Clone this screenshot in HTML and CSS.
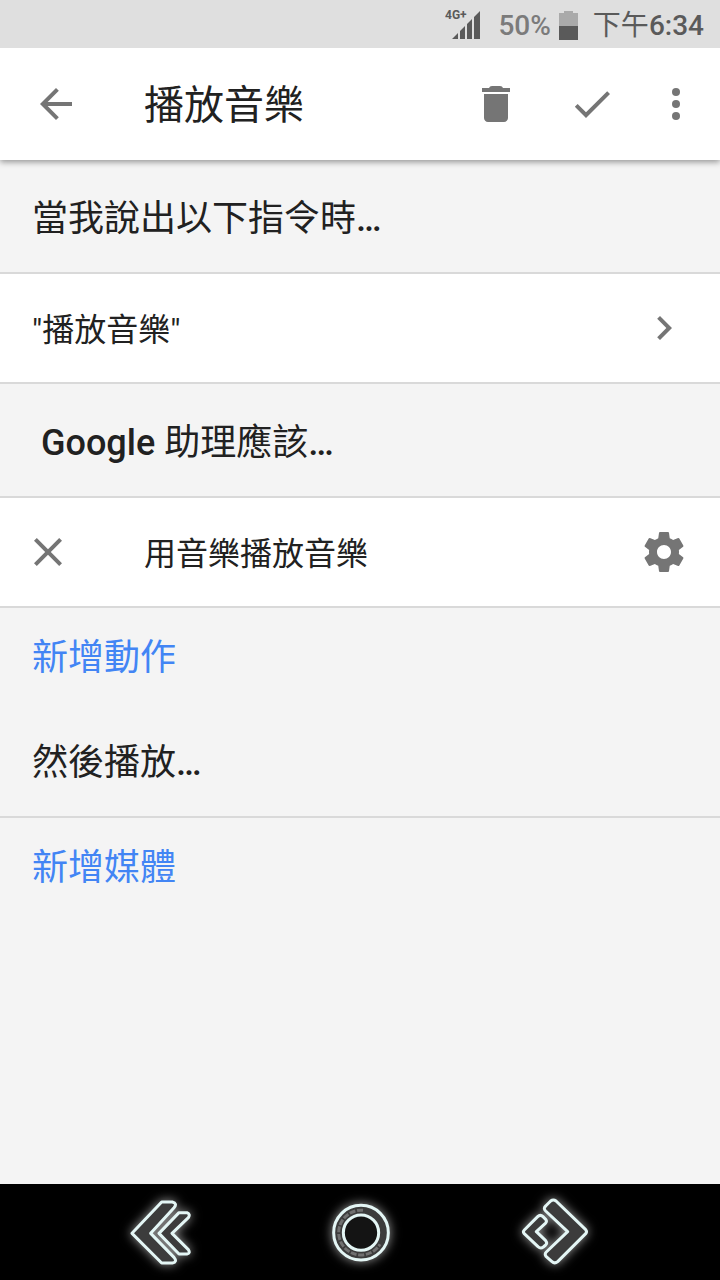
FILE: index.html
```html
<!DOCTYPE html>
<html lang="zh-Hant">
<head>
<meta charset="utf-8">
<meta name="viewport" content="width=device-width, initial-scale=1">
<title>播放音樂</title>
<link rel="stylesheet" href="styles.css">
</head>
<body>
<div class="screen">
  <div class="status">
    <svg class="signal" viewBox="0 0 36 32" aria-hidden="true">
      <text class="network" x="0" y="10">4G+</text>
      <path d="M7 30 13 24V30zM15 22 20 17V30H15zM22 15 27 10V30H22zM29 8 35 2V30H29z" fill="#5a5a5a"/>
    </svg>
    <span class="percent">50%</span>
    <svg class="battery" viewBox="0 0 20 32" aria-hidden="true">
      <path d="M0 4H5V2H14V4H19V18H0z" fill="#aaa"/>
      <path d="M0 17H19V31H0z" fill="#5a5a5a"/>
    </svg>
    <span class="clock">下午<span class="medium">6:34</span></span>
  </div>

  <header class="toolbar">
    <button class="icon-button back" aria-label="返回">
      <svg viewBox="0 0 24 24"><path d="M20 11H7.83l5.59-5.59L12 4l-8 8 8 8 1.41-1.41L7.83 13H20z"/></svg>
    </button>
    <h1 class="title">播放音樂</h1>
    <button class="icon-button" aria-label="刪除">
      <svg viewBox="0 0 24 24"><path d="M6 19c0 1.1.9 2 2 2h8c1.1 0 2-.9 2-2V7H6zM19 4h-3.500q-.3-1-1.500-1h-4q-1.200 0-1.500 1H5v2h14z"/></svg>
    </button>
    <button class="icon-button" aria-label="完成">
      <svg viewBox="0 0 24 24"><path d="M9 16.170 4.830 12l-1.420 1.410L9 19 21 7l-1.410-1.410z"/></svg>
    </button>
    <button class="icon-button more" aria-label="更多選項">
      <svg viewBox="0 0 24 24"><circle cx="12" cy="6" r="2"/><circle cx="12" cy="12" r="2"/><circle cx="12" cy="18" r="2"/></svg>
    </button>
  </header>

  <main class="content">
    <h2 class="heading">當我說出以下指令時<span class="medium">…</span></h2>
    <button class="row phrase">
      <span class="label">"播放音樂"</span>
      <svg class="icon" viewBox="0 0 24 24" aria-hidden="true"><path d="M10 6 8.590 7.410 13.170 12l-4.580 4.590L10 18l6-6z"/></svg>
    </button>
    <h2 class="heading"><span class="medium">&nbsp;Google </span>助理應該<span class="medium">…</span></h2>
    <div class="row">
      <button class="icon-button remove" aria-label="移除">
        <svg viewBox="0 0 24 24"><path d="M19 6.410 17.590 5 12 10.590 6.410 5 5 6.410 10.590 12 5 17.590 6.410 19 12 13.410 17.590 19 19 17.590 13.410 12z"/></svg>
      </button>
      <span class="label">用音樂播放音樂</span>
      <button class="icon-button settings" aria-label="設定">
        <svg viewBox="0 0 24 24"><path d="M19.430 12.980c.04-.32.07-.64.07-.98s-.03-.66-.07-.98l2.110-1.650c.19-.15.24-.42.12-.64l-2-3.460c-.12-.22-.39-.3-.61-.22l-2.490 1c-.52-.4-1.080-.73-1.690-.98l-.38-2.650C14.460 2.180 14.250 2 14 2h-4c-.25 0-.46.18-.49.42l-.38 2.650c-.61.25-1.170.59-1.690.98l-2.490-1c-.23-.09-.49 0-.61.22l-2 3.460c-.13.22-.07.49.12.64l2.110 1.650c-.04.32-.07.65-.07.98s.03.66.07.98l-2.110 1.650c-.19.15-.24.42-.12.64l2 3.460c.12.22.39.3.61.22l2.490-1c.52.4 1.080.73 1.690.98l.38 2.650c.03.24.24.42.49.42h4c.25 0 .46-.18.49-.42l.38-2.650c.61-.25 1.170-.59 1.690-.98l2.490 1c.23.09.49 0 .61-.22l2-3.460c.12-.22.07-.49-.12-.64zM12 15.500c-1.930 0-3.500-1.570-3.500-3.500s1.570-3.500 3.500-3.500 3.500 1.570 3.500 3.500-1.570 3.500-3.500 3.500z"/></svg>
      </button>
    </div>
    <button class="add">新增動作</button>
    <h2 class="heading">然後播放<span class="medium">…</span></h2>
    <button class="add">新增媒體</button>
  </main>

  <nav class="navbar">
    <button class="nav-button" aria-label="返回">
      <svg viewBox="-12 0 330 288">
        <g class="neon">
          <path d="M155 54H187Q203 58 192 71L122 148 192 220Q203 234 187 237H155L66 148z"/>
          <path d="M207 86H231Q242 90 235 101L186 148 235 197Q242 208 231 210H207L147 148z"/>
        </g>
      </svg>
    </button>
    <button class="nav-button" aria-label="主畫面">
      <svg viewBox="-15 0 330 288">
        <g class="neon">
          <circle cx="153" cy="146" r="82"/>
          <circle cx="153" cy="146" r="53" class="hole"/>
        </g>
        <path class="dashes" d="M159 79A67 67 0 1 0 210 181"/>
      </svg>
    </button>
    <button class="nav-button" aria-label="最近使用">
      <svg viewBox="12 0 330 288">
        <g class="neon">
          <path d="M152 51Q160 45 168 51L257 137Q262 143 257 149L173 233Q164 240 156 233L138 217Q133 210 139 204L203 143 137 81Q129 73 137 66z"/>
          <path d="M113 98Q121 90 129 98L137 106Q142 112 136 118L109 143 137 170Q143 177 137 183L130 189Q122 195 114 188L72 148Q68 143 73 138z"/>
        </g>
      </svg>
    </button>
  </nav>
</div>
</body>
</html>
```
FILE: styles.css
```css
* {
  box-sizing: border-box;
}

body {
  margin: 0;
  background: #f4f4f4;
  color: #212121;
  font-family: Roboto, "Noto Sans CJK TC", sans-serif;
}

button {
  margin: 0;
  padding: 0;
  border: 0;
  background: none;
  color: inherit;
  font: inherit;
  cursor: pointer;
}

svg {
  display: block;
}

.medium {
  font-weight: 500;
}

.screen {
  display: flex;
  flex-direction: column;
  min-height: 100vh;
}

.status {
  position: relative;
  z-index: 1;
  display: flex;
  align-items: center;
  justify-content: flex-end;
  height: 48px;
  padding: 2px 16px 0;
  background: #dfdfdf;
  color: #5a5a5a;
  font-size: 28px;
  line-height: 46px;
}

.signal {
  width: 36px;
  height: 32px;
  margin-right: 17px;
}

.network {
  fill: #5a5a5a;
  font-size: 12px;
  font-weight: 700;
}

.percent {
  padding-top: 2px;
  color: #7b7b7b;
  font-weight: 500;
}

.battery {
  width: 20px;
  height: 32px;
  margin: 0 14px 0 8px;
}

.clock {
  padding-top: 2px;
}

.toolbar {
  position: relative;
  display: flex;
  align-items: center;
  height: 112px;
  padding-left: 16px;
  background: #fff;
  box-shadow: 0 2px 6px rgba(0, 0, 0, 0.4);
}

.icon-button {
  display: flex;
  flex: none;
  align-items: center;
  justify-content: center;
  width: 96px;
  height: 96px;
}

.icon-button svg,
.icon {
  flex: none;
  width: 48px;
  height: 48px;
  fill: #757575;
}

.back {
  width: 80px;
}

.title {
  flex: 1;
  margin: 0;
  padding: 4px 0 0 48px;
  font-size: 40px;
  font-weight: 400;
  line-height: 56px;
}

.more {
  width: 72px;
  margin-right: 8px;
}

.content {
  display: flex;
  flex: 1;
  flex-direction: column;
}

.heading {
  margin: 0;
  padding: 35px 32px 29px;
  border-bottom: 2px solid #d9d9d9;
  font-size: 36px;
  font-weight: 400;
  line-height: 48px;
}

.row {
  display: flex;
  align-items: center;
  min-height: 110px;
  padding: 0 32px;
  border-bottom: 2px solid #d9d9d9;
  background: #fff;
  font-size: 32px;
  line-height: 48px;
  text-align: left;
}

.label {
  flex: 1;
  padding-top: 4px;
}

.remove {
  width: 32px;
  margin-right: 80px;
}

.settings {
  width: 48px;
}

.phrase {
  width: 100%;
}

.add {
  align-self: flex-start;
  padding: 26px 32px 22px;
  color: #4285f4;
  font-size: 36px;
  line-height: 48px;
}

.navbar {
  display: flex;
  height: 96px;
  padding: 0 62px;
  background: #000;
}

.nav-button {
  display: flex;
  flex: 1;
  justify-content: center;
}

.nav-button svg {
  width: 110px;
  height: 96px;
}

.neon {
  fill: #3c3c3c;
  stroke: #e4f6f5;
  stroke-width: 9px;
  stroke-linejoin: round;
  filter: drop-shadow(0 0 16px rgba(255, 255, 255, 0.6));
}

.hole {
  fill: #141414;
}

.dashes {
  fill: none;
  stroke: #707070;
  stroke-width: 9px;
  stroke-dasharray: 18px 5px;
}
```
